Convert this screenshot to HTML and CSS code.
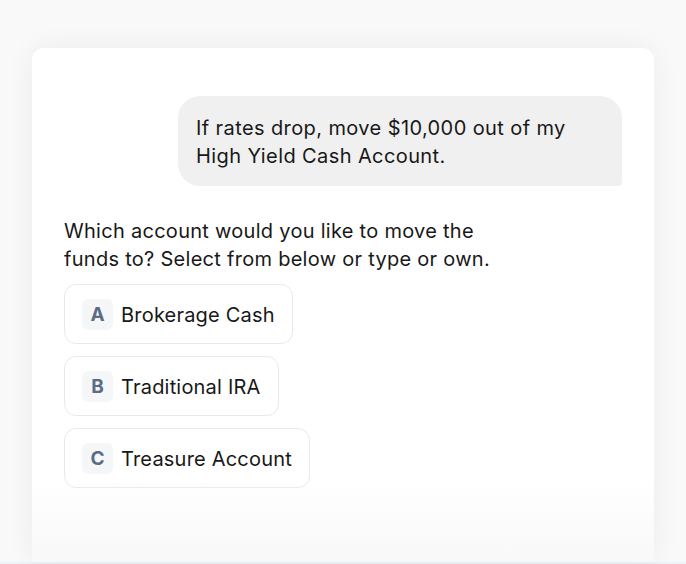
FILE: index.html
```html
<!DOCTYPE html>
<html lang="en">
<head>
<meta charset="utf-8">
<link rel="stylesheet" href="styles.css">
<title>Chat</title>
</head>
<body>
<div class="page">
  <main class="card">
    <div class="user-row">
      <div class="bubble">If rates drop, move $10,000 out of my High Yield Cash Account.</div>
    </div>
    <p class="question">Which account would you like to move the funds to? Select from below or type or own.</p>
    <div class="options">
      <button class="option"><span class="key">A</span><span class="label">Brokerage Cash</span></button>
      <button class="option"><span class="key">B</span><span class="label">Traditional IRA</span></button>
      <button class="option"><span class="key">C</span><span class="label">Treasure Account</span></button>
    </div>
    <div class="fade"></div>
  </main>
  <div class="baseline"></div>
</div>
</body>
</html>
```
FILE: styles.css
```css
* { box-sizing: border-box; }
html, body { margin: 0; height: 100%; }
body {
  background: #f9f9f9;
  font-family: Inter, "Noto Sans", sans-serif;
  color: #181818;
  overflow: hidden;
}
.page {
  height: 564px;
  display: flex;
  flex-direction: column;
  padding: 48px 32px 0;
}
.card {
  position: relative;
  flex: 1;
  background: #fff;
  border-radius: 12px 12px 0 0;
  box-shadow: 0 0 28px rgba(0, 0, 0, 0.06);
  padding: 48px 32px 0;
  overflow: hidden;
}
.baseline {
  height: 2px;
  margin: 0 -32px;
  background: #eef1f5;
}
.user-row {
  display: flex;
  justify-content: flex-end;
}
.bubble {
  width: 444px;
  background: #f0f0f0;
  border-radius: 22px 22px 4px 22px;
  padding: 18px 18px 16px;
  font-size: 20px;
  line-height: 28px;
  letter-spacing: 0.4px;
}
.question {
  margin: 31px 0 0;
  max-width: 444px;
  font-size: 20px;
  line-height: 28px;
  letter-spacing: 0.28px;
}
.options {
  margin-top: 11px;
  display: flex;
  flex-direction: column;
  align-items: flex-start;
  gap: 12px;
}
.option {
  display: flex;
  align-items: center;
  gap: 8px;
  height: 60px;
  padding: 1px 17px 0 17px;
  background: #fff;
  border: 1px solid #e9e9e9;
  border-radius: 12px;
  font-family: inherit;
  color: #181818;
  cursor: pointer;
}
.key {
  width: 31px;
  height: 31px;
  display: flex;
  align-items: center;
  justify-content: center;
  background: #f5f6f8;
  border-radius: 6px;
  color: #5a6d84;
  font-weight: 700;
  font-size: 19px;
}
.label {
  font-size: 20px;
  letter-spacing: 0.2px;
}
.fade {
  position: absolute;
  left: 0;
  right: 0;
  bottom: 0;
  height: 80px;
  background: linear-gradient(to bottom, rgba(249, 249, 249, 0), #f8f8f8);
}
```
